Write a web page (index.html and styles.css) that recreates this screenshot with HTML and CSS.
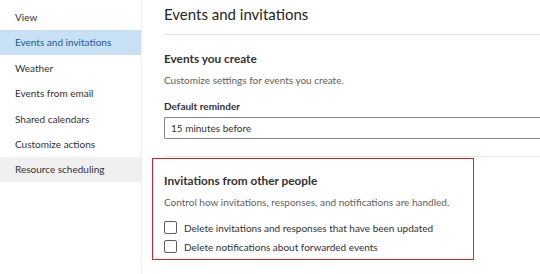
FILE: index.html
```html
<!doctype html>
<html>
<head>
	<meta charset="utf-8">
	<title>Calendar settings</title>
	<link rel="stylesheet" href="styles.css">
</head>
<body>
	<div class="app">
		<nav class="sidebar">
			<a class="nav-item" href="#">View</a>
			<a class="nav-item active" href="#">Events and invitations</a>
			<a class="nav-item" href="#">Weather</a>
			<a class="nav-item" href="#">Events from email</a>
			<a class="nav-item" href="#">Shared calendars</a>
			<a class="nav-item" href="#">Customize actions</a>
			<a class="nav-item hover" href="#">Resource scheduling</a>
		</nav>
		<main class="main">
			<h1 class="page-title">Events and invitations</h1>
			<section class="section">
				<h2 class="section-title">Events you create</h2>
				<p class="section-desc">Customize settings for events you create.</p>
				<label class="field-label">Default reminder</label>
				<div class="dropdown">15 minutes before</div>
			</section>
			<section class="section invitations">
				<h2 class="section-title">Invitations from other people</h2>
				<p class="section-desc">Control how invitations, responses, and notifications are handled.</p>
				<label class="check"><span class="box"></span>Delete invitations and responses that have been updated</label>
				<label class="check"><span class="box"></span>Delete notifications about forwarded events</label>
				<div class="highlight"></div>
			</section>
		</main>
	</div>
</body>
</html>
```
FILE: styles.css
```css
html, body {
	margin: 0;
	padding: 0;
	background: #fff;
}
body {
	font-family: Lato, "Open Sans", sans-serif;
	color: #323130;
	width: 540px;
	height: 274px;
	overflow: hidden;
}
.app {
	display: flex;
	height: 274px;
}

.sidebar {
	width: 141px;
	flex-shrink: 0;
	display: flex;
	flex-direction: column;
	padding-top: 4.3px;
	border-right: 1px solid #efefef;
}
.nav-item {
	display: flex;
	align-items: center;
	height: 25.4px;
	padding-left: 15px;
	font-size: 10px;
	color: #323130;
	text-decoration: none;
}
.nav-item.active {
	background: #c7e0f4;
	color: #1e5a94;
}
.nav-item.hover {
	background: #f0f0f0;
}

.main {
	flex: 1;
	padding-left: 22px;
	overflow: hidden;
}
.page-title {
	margin: 0;
	height: 34px;
	line-height: 29px;
	font-size: 15px;
	font-weight: 400;
	color: #252423;
	border-bottom: 1px solid #e6e6e6;
}

.section {
	position: relative;
	padding-top: 15px;
	padding-bottom: 17px;
	border-bottom: 1px solid #e6e6e6;
}
.section-title {
	margin: 0;
	font-size: 11.8px;
	font-weight: 700;
	line-height: 17px;
	color: #323130;
}
.section-desc {
	margin: 6px 0 0;
	font-size: 10px;
	line-height: 14px;
	color: #605e5c;
}
.field-label {
	display: block;
	margin-top: 12px;
	font-size: 10px;
	font-weight: 700;
	line-height: 14px;
	color: #323130;
}
.dropdown {
	margin-top: 4px;
	height: 20px;
	line-height: 20px;
	padding-left: 6px;
	border: 1px solid #8a8886;
	border-right: none;
	border-radius: 2px 0 0 2px;
	font-size: 10px;
	color: #323130;
}

.invitations {
	padding-top: 15px;
	border-bottom: none;
}
.check {
	display: flex;
	align-items: center;
	gap: 7px;
	height: 13px;
	margin-top: 6px;
	font-size: 10px;
	color: #323130;
}
.section-desc + .check {
	margin-top: 12px;
}
.box {
	width: 11px;
	height: 11px;
	border: 1px solid #605e5c;
	border-radius: 2px;
	flex-shrink: 0;
}
.highlight {
	position: absolute;
	top: 1px;
	left: -12px;
	width: 320px;
	height: 100px;
	border: 1.5px solid #d0242b;
	pointer-events: none;
}
```
